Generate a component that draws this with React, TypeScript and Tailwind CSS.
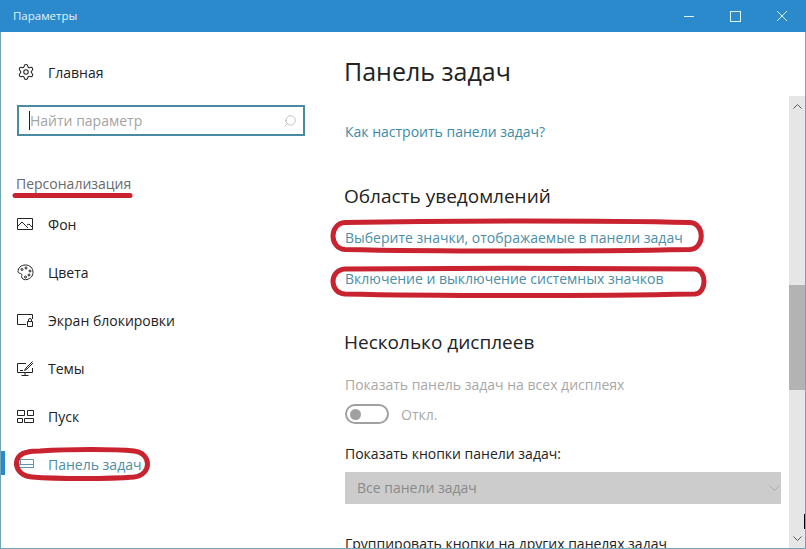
import { Search, Settings } from 'lucide-react';
import type { ReactNode } from 'react';

const font = "font-['Open_Sans','Noto_Sans',sans-serif]";

function NavItem({ icon, label, active }: { icon: ReactNode; label: string; active?: boolean }) {
  return (
    <div className="relative flex h-12 items-center pl-[16px]">
      {active && <div className="absolute left-0 top-[11px] h-6 w-[4px] bg-[#2a8acb]" />}
      <div className={`flex w-[31px] items-center ${active ? 'text-[#5f97a8]' : 'text-[#222]'}`}>{icon}</div>
      <span className={`text-[14px] ${active ? 'text-[#4d8ea3]' : 'text-[#222]'}`}>{label}</span>
    </div>
  );
}

function PictureIcon() {
  return (
    <svg width="17" height="14" viewBox="0 0 17 14" fill="none" stroke="currentColor" strokeWidth="1">
      <path d="M.5 1.5h15v11H.5z" />
      <path d="M1 9l4-4 6 6M10 8l2-1 3 3" />
    </svg>
  );
}

function PaletteIcon() {
  return (
    <svg width="17" height="17" viewBox="0 0 17 17" fill="none" stroke="currentColor" strokeWidth="1">
      <path d="M8.5 1C4 1 1 4 1 7.5c0 2 2.5 1.5 3.5 2.5s-.5 2 .5 4c1 1.5 3 2 5 1.5 3.5-1 6-3.5 6-7C16 4 13 1 8.5 1z" />
      <circle cx="5" cy="5.5" r="1" />
      <circle cx="9" cy="4" r="1" />
      <circle cx="13" cy="7" r="1" />
      <circle cx="12" cy="11" r="1" />
      <circle cx="8.5" cy="13" r="1" />
    </svg>
  );
}

function LockScreenIcon() {
  return (
    <svg width="17" height="14" viewBox="0 0 17 14" fill="none" stroke="currentColor" strokeWidth="1">
      <path d="M9 11.5H.5v-10h15V6" />
      <path d="M10.5 8.5h5v5h-5zM11.5 8.5V7a1.5 1.5 0 0 1 3 0v1.5" />
    </svg>
  );
}

function ThemesIcon() {
  return (
    <svg width="17" height="15" viewBox="0 0 17 15" fill="none" stroke="currentColor" strokeWidth="1">
      <path d="M9 2.5H.5v9h15V7M8 11.5v3M4.5 14.5h7" />
      <path d="M15.5.5L9 7l-1.5 2.5L10 8l6-6" />
      <path d="M3 9.5h3" />
    </svg>
  );
}

function StartIcon() {
  return (
    <svg width="17" height="13" viewBox="0 0 17 13" fill="none" stroke="currentColor" strokeWidth="1">
      <path d="M.5.5h7v5h-7zM10.5.5h6v5h-6zM.5 8.5h5v4h-5zM7.5 8.5h9v4h-9z" />
    </svg>
  );
}

function TaskbarIcon() {
  return (
    <svg width="17" height="11" viewBox="0 0 17 11" fill="none" stroke="currentColor" strokeWidth="1">
      <path d="M3.5 5.5V.5h13V9M1 5.5h15.5M1 8.5h15.5" />
    </svg>
  );
}

export default function App() {
  return (
    <div className={`relative flex h-[549px] w-[806px] flex-col overflow-hidden bg-white ${font}`}>
      <div className="flex h-8 shrink-0 items-center justify-between bg-[#2a8acb] pl-[13px] text-white">
        <span className="text-[11.5px] text-[#e4f3fb]">Параметры</span>
        <div className="flex items-center text-[#d9f5fb]">
          <div className="mr-[36px] h-px w-[10px] bg-current" />
          <div className="mr-[35px] h-[11px] w-[11px] border border-current" />
          <svg className="mr-[18px]" width="12" height="12" viewBox="0 0 12 12" stroke="currentColor" strokeWidth="1">
            <path d="M1 1l10 10M11 1L1 11" />
          </svg>
        </div>
      </div>

      <div className="flex min-h-0 flex-1 border-x border-b border-[#6fa6bb]">
        <aside className="w-[329px] shrink-0">
          <div className="mt-[16px] flex h-[48px] items-center pl-[16px]">
            <div className="w-[31px]">
              <Settings size={18} strokeWidth={1.4} className="text-[#222]" />
            </div>
            <span className="text-[14px] text-[#222]">Главная</span>
          </div>
          <div className="ml-[16px] mt-[9px] flex h-[31px] w-[288px] items-center border-2 border-[#4a8ba3] pl-[10px] pr-[6px]">
            <div className="h-[19px] w-px bg-[#222]" />
            <span className="-mt-px flex-1 text-[14px] text-[#a3a3a3]">Найти параметр</span>
            <Search size={14} strokeWidth={1} className="-scale-x-100 text-[#999]" />
          </div>
          <div className="ml-[15px] mt-[38px] text-[14px] leading-[20px] text-[#6a6a6a]">Персонализация</div>
          <div className="mt-[6px]">
            <NavItem icon={<PictureIcon />} label="Фон" />
            <NavItem icon={<PaletteIcon />} label="Цвета" />
            <NavItem icon={<LockScreenIcon />} label="Экран блокировки" />
            <NavItem icon={<ThemesIcon />} label="Темы" />
            <NavItem icon={<StartIcon />} label="Пуск" />
            <NavItem icon={<TaskbarIcon />} label="Панель задач" active />
          </div>
        </aside>

        <main className="min-w-0 flex-1 overflow-hidden pl-[15px]">
          <h1 className="-ml-px mt-[20px] text-[25px] leading-[38px] text-[#222]">Панель задач</h1>
          <div className="mt-[32px] text-[14px] leading-5 text-[#3b8ba5]">Как настроить панели задач?</div>
          <h2 className="-ml-px mt-[41px] text-[19px] leading-[26px] text-[#222]">Область уведомлений</h2>
          <div className="mt-[19px] text-[14px] leading-5 text-[#4b8ea6]">Выберите значки, отображаемые в панели задач</div>
          <div className="mt-[21px] text-[14px] leading-5 text-[#4b8ea6]">Включение и выключение системных значков</div>
          <h2 className="-ml-px mt-[40px] text-[19px] leading-[26px] text-[#222]">Несколько дисплеев</h2>
          <div className="mt-[20px] text-[14px] leading-5 text-[#a8a8a8]">Показать панель задач на всех дисплеях</div>
          <div className="mt-[9px] flex h-5 items-center">
            <div className="flex h-[20px] w-[44px] items-center rounded-full border-2 border-[#a0a0a0] pl-[3px]">
              <div className="h-[11px] w-[11px] rounded-full bg-[#a0a0a0]" />
            </div>
            <span className="ml-[12px] text-[14px] text-[#a8a8a8]">Откл.</span>
          </div>
          <div className="mt-[20px] text-[14px] leading-5 text-[#222]">Показать кнопки панели задач:</div>
          <div className="mt-[8px] flex h-[32px] w-[436px] items-center justify-between bg-[#cccccc] pl-[12px] pr-[1px]">
            <span className="-mt-[2px] text-[14px] text-[#8a8a8a]">Все панели задач</span>
            <svg width="11" height="6" viewBox="0 0 11 6" fill="none" stroke="#aaa" strokeWidth="1">
              <path d="M.5.5l5 5 5-5" />
            </svg>
          </div>
          <div className="mt-[30px] text-[14px] leading-5 text-[#222]">Группировать кнопки на других панелях задач</div>
        </main>

        <div className="mt-[64px] flex w-[16px] shrink-0 flex-col bg-[#e6e6e6]">
          <div className="flex h-[20px] items-center justify-center">
            <svg width="9" height="5" viewBox="0 0 9 5" fill="none" stroke="#555" strokeWidth="1">
              <path d="M.5 4.5l4-4 4 4" />
            </svg>
          </div>
          <div className="mt-[169px] h-[105px] bg-[#b3b3b3]" />
          <div className="mt-auto flex h-[20px] items-center justify-center">
            <svg width="9" height="5" viewBox="0 0 9 5" fill="none" stroke="#555" strokeWidth="1">
              <path d="M.5.5l4 4 4-4" />
            </svg>
          </div>
        </div>
      </div>

      <div className="absolute right-0 top-[514px] h-[15px] w-[2px] border-l border-black" />

      <svg className="pointer-events-none absolute left-0 top-0" width="806" height="549" fill="none" stroke="#c8232f" strokeLinecap="round" strokeWidth="5">
        <path d="M15 195.5h115" />
        <path d="M40 451c30-2 75-2 94 0 18 2 18 24 0 26-25 2-77 2-102 0-20-2-20-23-4-25 4-1 8-1 12-1z" />
        <path d="M345 222.500c100-2 260-2 345 0 15 1 15 26 0 27-100 2-260 2-345 0-16-1-16-26 0-27z" />
        <path d="M345 269c100-1 265-1 350 0 12 1 12 24 0 25-100 2-265 2-350 0-16-1-16-24 0-25z" />
      </svg>
    </div>
  );
}
